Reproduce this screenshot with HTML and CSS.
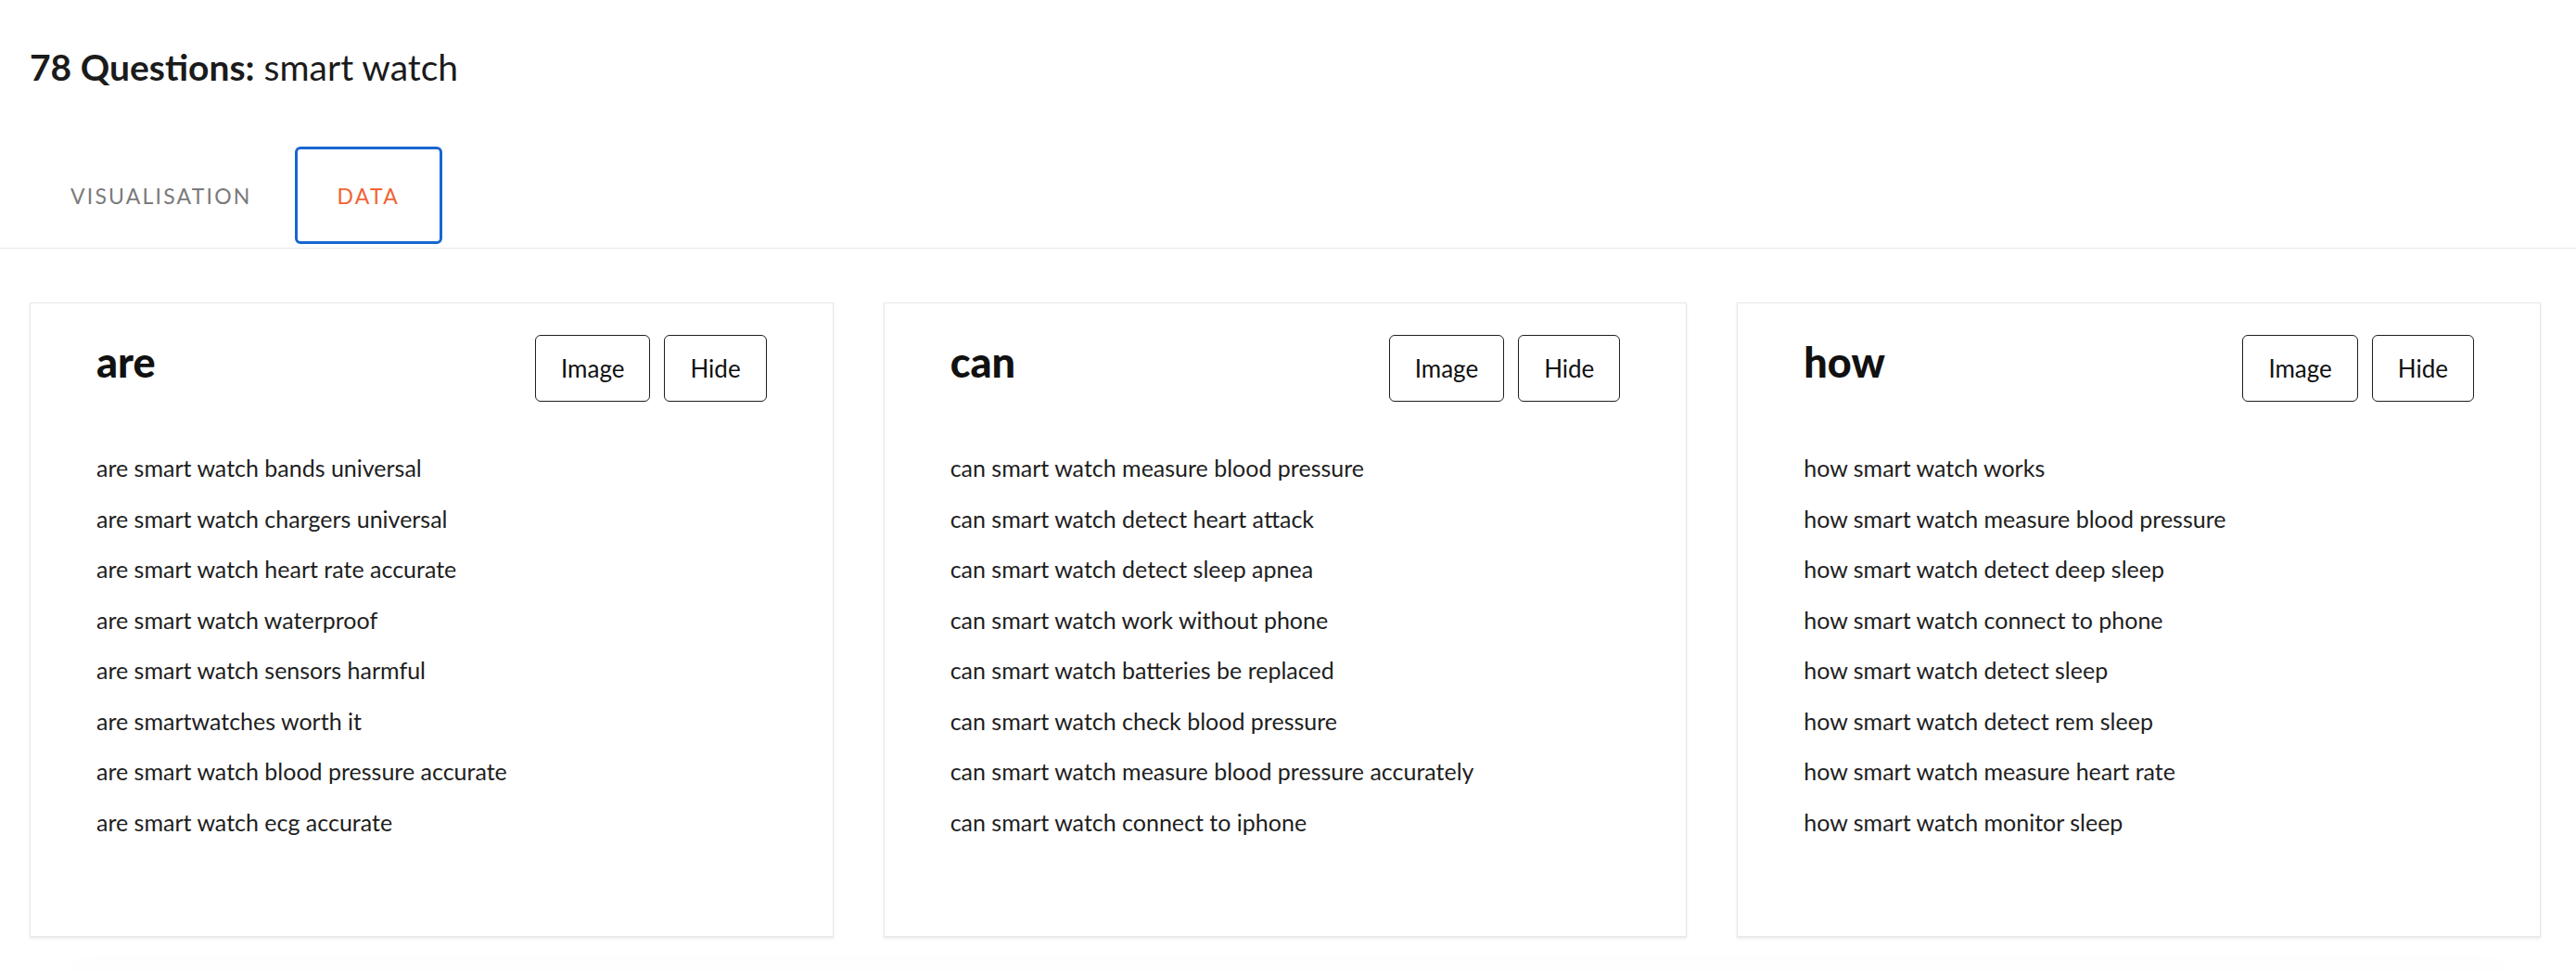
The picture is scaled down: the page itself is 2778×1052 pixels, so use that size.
FILE: index.html
```html
<!DOCTYPE html>
<html lang="en">
<head>
    <meta charset="UTF-8">
    <meta name="viewport" content="width=device-width, initial-scale=1.0">
	<link rel="stylesheet" href="styles.css">
</head>
<body>
<div class="page">
	<h1 class="title"><b>78 Questions:</b> smart watch</h1>
	<div class="tabs">
		<div class="tab">VISUALISATION</div>
		<div class="tab active">DATA</div>
	</div>
	<div class="cards">
		<div class="card">
			<div class="card-head">
				<h2>are</h2>
				<div class="btns">
					<button class="btn">Image</button>
					<button class="btn">Hide</button>
				</div>
			</div>
			<ul class="list">
				<li>are smart watch bands universal</li>
				<li>are smart watch chargers universal</li>
				<li>are smart watch heart rate accurate</li>
				<li>are smart watch waterproof</li>
				<li>are smart watch sensors harmful</li>
				<li>are smartwatches worth it</li>
				<li>are smart watch blood pressure accurate</li>
				<li>are smart watch ecg accurate</li>
			</ul>
		</div>
		<div class="card">
			<div class="card-head">
				<h2>can</h2>
				<div class="btns">
					<button class="btn">Image</button>
					<button class="btn">Hide</button>
				</div>
			</div>
			<ul class="list">
				<li>can smart watch measure blood pressure</li>
				<li>can smart watch detect heart attack</li>
				<li>can smart watch detect sleep apnea</li>
				<li>can smart watch work without phone</li>
				<li>can smart watch batteries be replaced</li>
				<li>can smart watch check blood pressure</li>
				<li>can smart watch measure blood pressure accurately</li>
				<li>can smart watch connect to iphone</li>
			</ul>
		</div>
		<div class="card">
			<div class="card-head">
				<h2>how</h2>
				<div class="btns">
					<button class="btn">Image</button>
					<button class="btn">Hide</button>
				</div>
			</div>
			<ul class="list">
				<li>how smart watch works</li>
				<li>how smart watch measure blood pressure</li>
				<li>how smart watch detect deep sleep</li>
				<li>how smart watch connect to phone</li>
				<li>how smart watch detect sleep</li>
				<li>how smart watch detect rem sleep</li>
				<li>how smart watch measure heart rate</li>
				<li>how smart watch monitor sleep</li>
			</ul>
		</div>
	</div>
	<div class="more"></div>
</div>
</body>
</html>
```

FILE: styles.css
```css
body{
	margin:0;
	background:#fff;
	font-family:Lato, "Open Sans", sans-serif;
	color:#1d1d1d;
}
.title{
	margin:0;
	padding:48px 0 0 32px;
	font-size:39px;
	line-height:48px;
	font-weight:400;
	color:#1b1b1b;
}
.title b{
	font-weight:700;
}
.tabs{
	display:flex;
	margin-top:62px;
	padding:0 0 4px 30px;
	border-bottom:1px solid #e8e8e8;
}
.tab{
	height:105px;
	box-sizing:border-box;
	padding:0 43px;
	display:flex;
	align-items:center;
	font-size:23px;
	letter-spacing:2.2px;
	color:#7a7a7a;
	border:3px solid transparent;
	border-radius:6px;
}
.tab.active{
	color:#f26334;
	border-color:#1766d1;
}
.cards{
	display:grid;
	grid-template-columns:repeat(3, 1fr);
	gap:54px;
	padding:0 38px 0 32px;
	margin-top:58px;
}
.card{
	border:1px solid #e6e6e6;
	box-shadow:0 2px 3px rgba(0,0,0,0.08);
	padding:34px 71px 96px;
	background:#fff;
}
.card-head{
	display:flex;
	justify-content:space-between;
	align-items:center;
}
.card-head h2{
	margin:0 0 14px;
	font-size:45px;
	font-weight:900;
	color:#111;
}
.btns{
	display:flex;
	gap:15px;
}
.btn{
	height:72px;
	padding:0 27px;
	background:#fff;
	border:1px solid #1f1f1f;
	border-radius:6px;
	font-family:inherit;
	font-size:26px;
	color:#111;
}
.list{
	list-style:none;
	margin:44px 0 0;
	padding:0;
}
.list li{
	font-size:25px;
	line-height:54.5px;
	color:#1e1e1e;
}
.more{
	margin:38px 70px 0;
	height:8px;
	box-shadow:0 -6px 30px rgba(0,0,0,0.03);
}
```
